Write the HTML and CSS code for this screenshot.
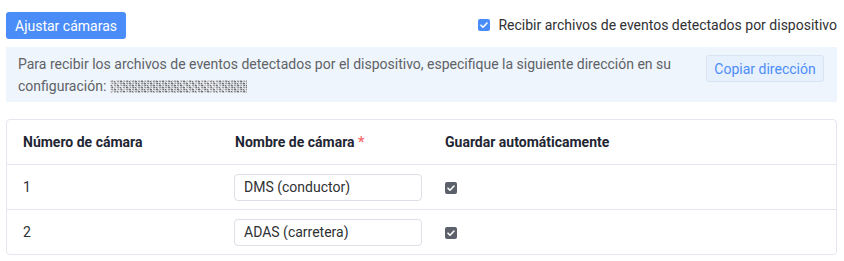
FILE: index.html
```html
<!DOCTYPE html>
<html lang="es">
<head>
    <meta charset="UTF-8">
    <meta name="viewport" content="width=device-width, initial-scale=1.0">
    <title>Cámaras</title>
    <link rel="stylesheet" href="styles.css">
</head>
<body>
    <div class="page">
        <div class="toolbar">
            <button class="btn-primary">Ajustar cámaras</button>
            <label class="check-label">
                <span class="check check-blue"><svg viewBox="0 0 12 12"><path d="M3 6.2l2 2 4-4.2" /></svg></span>
                Recibir archivos de eventos detectados por dispositivo
            </label>
        </div>

        <div class="notice">
            <div class="notice-text">
                Para recibir los archivos de eventos detectados por el dispositivo, especifique la siguiente dirección en su configuración: <span class="masked"></span>
            </div>
            <button class="btn-light">Copiar dirección</button>
        </div>

        <div class="table-wrap">
            <table class="cams">
                <colgroup>
                    <col class="col-num">
                    <col class="col-name">
                    <col>
                </colgroup>
                <thead>
                    <tr>
                        <th>Número de cámara</th>
                        <th>Nombre de cámara <span class="req">*</span></th>
                        <th>Guardar automáticamente</th>
                    </tr>
                </thead>
                <tbody>
                    <tr>
                        <td>1</td>
                        <td><input type="text" class="name-input" value="DMS (conductor)"></td>
                        <td><span class="check check-gray"><svg viewBox="0 0 12 12"><path d="M3 6.2l2 2 4-4.2" /></svg></span></td>
                    </tr>
                    <tr>
                        <td>2</td>
                        <td><input type="text" class="name-input" value="ADAS (carretera)"></td>
                        <td><span class="check check-gray"><svg viewBox="0 0 12 12"><path d="M3 6.2l2 2 4-4.2" /></svg></span></td>
                    </tr>
                </tbody>
            </table>
        </div>
    </div>
</body>
</html>
```

FILE: styles.css
```css
body { margin: 0; font-family: Roboto, "Liberation Sans", Arial, sans-serif; font-size: 14px; color: #303133; background: #fff; }
.page { padding: 12px 7px 0 6px; }

.toolbar { display: flex; justify-content: space-between; align-items: center; height: 27px; }
.btn-primary { height: 27px; width: 120px; padding: 0; border: none; border-radius: 3px; background: #4b8df8; color: #fff; font: inherit; font-size: 14px; cursor: pointer; }
.check-label { display: flex; align-items: center; gap: 8px; color: #303133; font-size: 14px; margin-top: -2px; }

.check { display: inline-flex; width: 12px; height: 12px; border-radius: 2px; vertical-align: middle; }
.check svg { width: 12px; height: 12px; fill: none; stroke: #fff; stroke-width: 1.6; stroke-linecap: round; stroke-linejoin: round; }
.check-blue { background: #4b8df8; }
.check-gray { background: #5b606a; }

.notice { display: flex; align-items: flex-start; gap: 22px; margin-top: 8px; padding: 6px 13px 5px 12px; background: #eef5fd; }
.notice-text { flex: 1; line-height: 22px; color: #606266; }
.masked { display: inline-block; width: 137px; height: 13px; vertical-align: -2px;
    background:
        repeating-linear-gradient(90deg, rgba(255,255,255,0.6) 0 1px, transparent 1px 3px),
        repeating-linear-gradient(0deg, rgba(255,255,255,0.5) 0 1px, transparent 1px 2px),
        repeating-linear-gradient(45deg, #6f737a 0 2px, #c9cbd0 2px 3px, #9a9da3 3px 5px); }
.btn-light { flex: none; margin-top: 2px; height: 27px; width: 118px; padding: 0; border: 1px solid #d8e4f2; border-radius: 3px; background: #e7f1fd; color: #4b8df8; font: inherit; font-size: 14px; cursor: pointer; }

.table-wrap { margin-top: 17px; border: 1px solid #e4e7ed; border-radius: 4px; }
.cams { width: 100%; table-layout: fixed; border-collapse: collapse; }
.col-num { width: 212px; }
.col-name { width: 210px; }
.cams th, .cams td { height: 44px; padding: 0 16px; text-align: left; }
.cams th { font-weight: 700; color: #1f2634; }
.cams tbody td { border-top: 1px solid #e4e7ed; }
.req { color: #f56c6c; }
.name-input { box-sizing: border-box; width: 188px; height: 27px; padding: 0 9px; border: 1px solid #dcdfe6; border-radius: 4px; font: inherit; font-size: 14px; color: #303133; margin-left: -1px; }
```
